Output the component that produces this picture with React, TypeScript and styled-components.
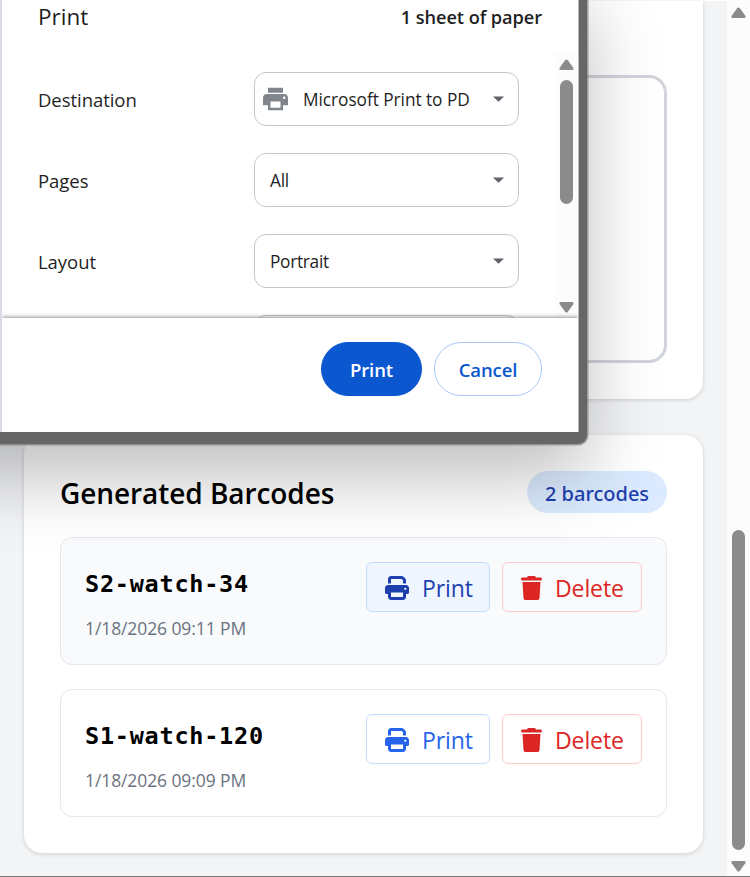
import React from "react";
import styled, { createGlobalStyle } from "styled-components";
import { FaPrint, FaTrash } from "react-icons/fa6";
import { MdPrint } from "react-icons/md";

const GlobalStyle = createGlobalStyle`
  * { box-sizing: border-box; }
  body { margin: 0; overflow: hidden; font-family: "Open Sans", "Noto Sans", sans-serif; color: #1f1f1f; }
  button { font-family: inherit; margin: 0; }
`;

const Screen = styled.div`
  position: relative;
  display: flex;
  width: 750px;
  height: 877px;
  overflow: hidden;
  border-bottom: 1px solid #777;
  background: #f3f4f6;
`;

const Page = styled.main`
  width: 727px;
  padding: 0 24px;
  display: flex;
  flex-direction: column;
  gap: 36px;
  border-top: 1px solid #fff;
`;

const Card = styled.section`
  width: 679px;
  padding: 36px;
  background: #fff;
  border-radius: 18px;
  box-shadow: 0 1px 4px rgba(0, 0, 0, 0.16);
`;

const PreviewCard = styled(Card)`
  height: 398px;
  padding-top: 74px;
  border-radius: 0 0 18px 18px;
`;

const PreviewFrame = styled.div`
  height: 288px;
  border: 3px solid #d1d5db;
  border-radius: 18px;
`;

const CardHeader = styled.header`
  display: flex;
  align-items: center;
  justify-content: space-between;
  height: 42px;
  margin-bottom: 24px;
`;

const CardTitle = styled.h2`
  margin: 1px 0 0;
  font-size: 28px;
  font-weight: 600;
  line-height: 40px;
  letter-spacing: -0.07px;
  color: #000;
`;

const CountBadge = styled.span`
  display: flex;
  align-items: center;
  justify-content: center;
  width: 140px;
  height: 42px;
  padding-top: 2px;
  border-radius: 21px;
  background: #dbeafe;
  color: #1e40af;
  font-family: "Noto Sans", sans-serif;
  font-size: 20px;
  font-weight: 500;
`;

const BarcodeList = styled.div`
  display: flex;
  flex-direction: column;
  gap: 24px;
`;

const BarcodeRow = styled.article<{ $active?: boolean }>`
  display: flex;
  justify-content: space-between;
  height: 128px;
  padding: 24px;
  border: 1px solid #e5e7eb;
  border-radius: 12px;
  background: ${(p) => (p.$active ? "#f9fafb" : "#fff")};
`;

const BarcodeInfo = styled.div`
  display: flex;
  flex-direction: column;
`;

const BarcodeName = styled.div`
  height: 42px;
  font: 700 23.5px/44px "DejaVu Sans Mono", monospace;
  letter-spacing: 0.75px;
  color: #000;
`;

const BarcodeDate = styled.div`
  margin-top: 11px;
  font-size: 17.5px;
  line-height: 26px;
  letter-spacing: -0.1px;
  color: #6b7280;
`;

const Actions = styled.div`
  display: flex;
  gap: 12px;
`;

const ActionButton = styled.button<{ $kind: "print" | "delete"; $active?: boolean }>`
  display: flex;
  align-items: center;
  gap: 12px;
  width: ${(p) => (p.$kind === "print" ? 124 : 140)}px;
  height: 50px;
  padding: 1px 0 0 18px;
  border: 1px solid ${(p) => (p.$kind === "print" ? "#bfdbfe" : "#fecaca")};
  border-radius: 6px;
  background: ${(p) => (p.$active ? "#eff6ff" : "transparent")};
  color: ${(p) => (p.$kind === "delete" ? "#dc2626" : p.$active ? "#1e40af" : "#2563eb")};
  font-size: 23px;
  line-height: 46px;

  svg { flex: none; width: ${(p) => (p.$kind === "print" ? 24 : 21)}px; height: 24px; }
  span { padding-left: 1px; letter-spacing: -0.1px; }
`;

const ScrollTrack = styled.div<{ $thumbTop: number; $thumbHeight: number }>`
  display: flex;
  flex-direction: column;
  align-items: center;
  width: 23px;
  background: #fcfcfc;

  svg { flex: none; fill: #8b8b8b; }
  div {
    flex: none;
    width: 13px;
    height: ${(p) => p.$thumbHeight}px;
    margin-top: ${(p) => p.$thumbTop}px;
    border-radius: 7px;
    background: #8b8b8b;
  }
  svg:last-child { margin-top: auto; }
`;

const PageScroll = styled(ScrollTrack)`
  padding: 7px 0 4px;
`;

const DialogScroll = styled(ScrollTrack)`
  padding: 6px 0 5px;
`;

/* The dialog floats over the page and runs past its top and left edges. */
const DialogFrame = styled.div`
  position: absolute;
  top: -24px;
  left: -120px;
  width: 707px;
  height: 468px;
  padding: 24px 8px 12px 120px;
  background: #666;
  border-radius: 0 0 9px 0;
  box-shadow: 0 0 0 1.5px rgba(110, 110, 110, 0.6), 0 32px 72px rgba(0, 0, 0, 0.26);
`;

const Dialog = styled.div`
  display: flex;
  flex-direction: column;
  width: 579px;
  height: 432px;
  border-left: 2px solid #dadae2;
  border-right: 1px solid #b8b8b8;
  background: #fff;
`;

const DialogHeader = styled.header`
  display: flex;
  align-items: center;
  justify-content: space-between;
  height: 53px;
  padding: 0 36px 19px 36px;
`;

const DialogTitle = styled.h1`
  margin: 0;
  font-size: 22.5px;
  font-weight: 400;
  line-height: 34px;
`;

const SheetCount = styled.span`
  font-size: 18.2px;
  font-weight: 600;
  letter-spacing: -0.07px;
`;

const DialogBody = styled.div`
  display: flex;
  justify-content: space-between;
  height: 265px;
  overflow: hidden;
  background: #fff;
`;

const Settings = styled.div`
  display: flex;
  flex-direction: column;
  gap: 27px;
  padding: 19px 0 0 36px;
`;

const SettingRow = styled.div`
  display: flex;
  flex: none;
  align-items: center;
  height: 54px;
`;

const SettingLabel = styled.label`
  width: 216px;
  padding-top: 1px;
  font-size: 18.5px;
  letter-spacing: -0.05px;
`;

const Select = styled.div<{ $icon?: boolean }>`
  display: flex;
  align-items: center;
  width: 265px;
  height: 54px;
  padding: 0 14px 0 ${(p) => (p.$icon ? 5 : 15)}px;
  border: 1px solid #c4c7c5;
  border-radius: 12px;
  font-size: 17.3px;

  span { letter-spacing: ${(p) => (p.$icon ? "-0.05px" : "-0.3px")}; }
  .printer { flex: none; width: 31px; height: 30px; margin-right: 12px; color: #80868b; }
  .caret { flex: none; margin-left: auto; fill: #5f6368; }
`;

const DialogFooter = styled.footer`
  position: relative;
  display: flex;
  flex: 1;
  justify-content: flex-end;
  gap: 12px;
  padding: 24px 36px 0 0;
  background: #fff;
  box-shadow: 0 -1px 4px rgba(0, 0, 0, 0.42);
  clip-path: inset(-8px 0 0 0);
`;

const DialogButton = styled.button<{ $primary?: boolean }>`
  width: ${(p) => (p.$primary ? 101 : 108)}px;
  height: 54px;
  padding: 1px 0 0;
  border: 1px solid ${(p) => (p.$primary ? "#0b57d0" : "#a8c7fa")};
  border-radius: 27px;
  background: ${(p) => (p.$primary ? "#0b57d0" : "#fff")};
  color: ${(p) => (p.$primary ? "#fff" : "#0b57d0")};
  font-size: 18.5px;
  font-weight: 600;
  letter-spacing: -0.1px;
`;

const ArrowUp = () => (
  <svg width="15" height="12" viewBox="0 0 15 12"><path d="M6.3 1.1Q7.5-.2 8.7 1.1L14.3 8.8Q15.3 11 13.2 11H1.8Q-.3 11 .7 8.8Z" /></svg>
);
const ArrowDown = () => (
  <svg width="15" height="12" viewBox="0 0 15 12"><path d="M6.3 10.9Q7.5 12.2 8.7 10.9L14.3 3.2Q15.3 1 13.2 1H1.8Q-.3 1 .7 3.2Z" /></svg>
);
const Caret = () => (
  <svg className="caret" width="11" height="6" viewBox="0 0 11 6"><path d="M0 .4H11L5.5 5.7Z" /></svg>
);

const settings = [
  { label: "Destination", value: "Microsoft Print to PD", icon: true },
  { label: "Pages", value: "All" },
  { label: "Layout", value: "Portrait" },
  { label: "", value: "" },
];

const barcodes = [
  { name: "S2-watch-34", date: "1/18/2026 09:11 PM", active: true },
  { name: "S1-watch-120", date: "1/18/2026 09:09 PM", active: false },
];

export default function App() {
  return (
    <Screen>
      <GlobalStyle />
      <Page>
        <PreviewCard><PreviewFrame /></PreviewCard>
        <Card>
          <CardHeader>
            <CardTitle>Generated Barcodes</CardTitle>
            <CountBadge>2 barcodes</CountBadge>
          </CardHeader>
          <BarcodeList>
            {barcodes.map((b) => (
              <BarcodeRow key={b.name} $active={b.active}>
                <BarcodeInfo>
                  <BarcodeName>{b.name}</BarcodeName>
                  <BarcodeDate>{b.date}</BarcodeDate>
                </BarcodeInfo>
                <Actions>
                  <ActionButton $kind="print" $active={b.active}><FaPrint /><span>Print</span></ActionButton>
                  <ActionButton $kind="delete"><FaTrash /><span>Delete</span></ActionButton>
                </Actions>
              </BarcodeRow>
            ))}
          </BarcodeList>
        </Card>
      </Page>
      <PageScroll $thumbTop={511} $thumbHeight={320}><ArrowUp /><div /><ArrowDown /></PageScroll>
      <DialogFrame>
        <Dialog>
          <DialogHeader>
            <DialogTitle>Print</DialogTitle>
            <SheetCount>1 sheet of paper</SheetCount>
          </DialogHeader>
          <DialogBody>
            <Settings>
              {settings.map((s, i) => (
                <SettingRow key={i}>
                  <SettingLabel>{s.label}</SettingLabel>
                  <Select $icon={s.icon}>
                    {s.icon && <MdPrint className="printer" />}
                    <span>{s.value}</span>
                    <Caret />
                  </Select>
                </SettingRow>
              ))}
            </Settings>
            <DialogScroll $thumbTop={9} $thumbHeight={124}><ArrowUp /><div /><ArrowDown /></DialogScroll>
          </DialogBody>
          <DialogFooter>
            <DialogButton $primary>Print</DialogButton>
            <DialogButton>Cancel</DialogButton>
          </DialogFooter>
        </Dialog>
      </DialogFrame>
    </Screen>
  );
}
